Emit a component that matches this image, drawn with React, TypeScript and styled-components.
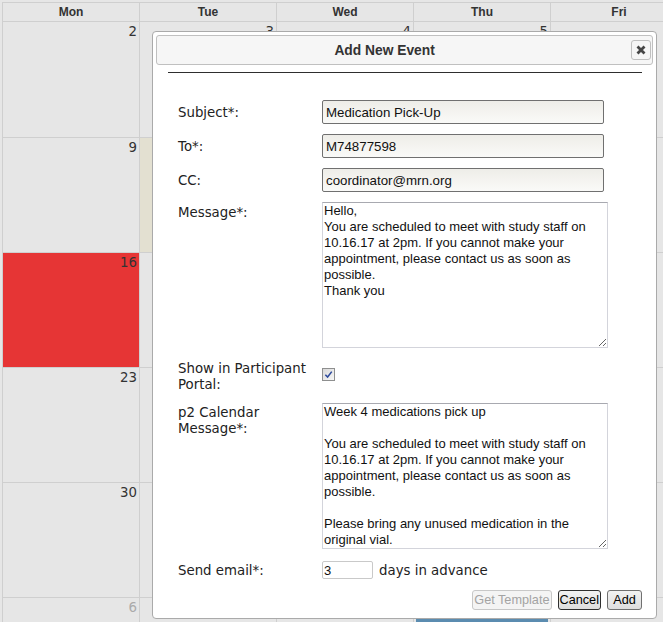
import styled, { createGlobalStyle } from 'styled-components';

const GlobalStyle = createGlobalStyle`
  html,
  body {
    margin: 0;
    height: 100%;
  }

  body {
    background: #e6e6e6;
    overflow: hidden;
    font-family: 'DejaVu Sans', Verdana, sans-serif;
  }
`;

const Page = styled.div`
  position: relative;
  height: 622px;
  padding: 2px 0 0 2px;
  box-sizing: border-box;
  overflow: hidden;
`;

/* month grid */

const Calendar = styled.div`
  display: grid;
  grid-template-columns: repeat(5, 137px);
  grid-template-rows: 19px 116px repeat(5, 115px);
  border-left: 1px solid #cfcfcf;
  border-top: 1px solid #cfcfcf;
`;

const HeaderCell = styled.div`
  box-sizing: border-box;
  border-right: 1px solid #cfcfcf;
  border-bottom: 1px solid #cfcfcf;
  background: #e6e6e6;
  text-align: center;
  font: bold 12px/18px 'Liberation Sans', Arial, sans-serif;
  color: #333;
`;

type Tone = 'plain' | 'today' | 'alert';

const cellColors: Record<Tone, string> = {
  plain: '#e6e6e6',
  today: '#e3e0d1',
  alert: '#e63535',
};

const DayCell = styled.div<{ $tone: Tone }>`
  box-sizing: border-box;
  border-right: 1px solid #cfcfcf;
  border-bottom: 1px solid #cfcfcf;
  background: ${({ $tone }) => cellColors[$tone]};
  padding: 2px 2px 0;
  overflow: hidden;
`;

const DayNumber = styled.div<{ $muted?: boolean }>`
  text-align: right;
  font-size: 13.33px;
  line-height: 16px;
  color: ${({ $muted }) => ($muted ? '#aaa' : '#333')};
`;

const EventChip = styled.div`
  margin: 3px 0 0;
  padding: 1px 4px;
  background: #5b8cb0;
  color: #fff;
  font: 11px/14px 'Liberation Sans', Arial, sans-serif;
  white-space: nowrap;
  overflow: hidden;
`;

/* dialog */

const Dialog = styled.div`
  position: absolute;
  left: 152px;
  top: 31px;
  width: 505px;
  height: 588px;
  box-sizing: border-box;
  padding: 3px;
  display: flex;
  flex-direction: column;
  background: #fff;
  border: 1px solid #aaa;
  border-radius: 4px;
`;

const TitleBar = styled.div`
  height: 30px;
  box-sizing: border-box;
  display: flex;
  align-items: center;
  padding: 0 1px 0 14px;
  background: #f6f6f6;
  border: 1px solid #c0c0c0;
  border-radius: 3px;
`;

const Title = styled.span`
  width: 89%;
  text-align: center;
  font: bold 13.8px 'Liberation Sans', Arial, sans-serif;
  color: #333;
`;

const CloseButton = styled.button`
  margin-left: auto;
  width: 20px;
  height: 20px;
  padding: 0;
  display: flex;
  align-items: center;
  justify-content: center;
  background: #f6f6f6;
  border: 1px solid #c0c0c0;
  border-radius: 3px;
`;

const Divider = styled.hr`
  margin: 7px 11px 0 12px;
  border: 0;
  border-top: 1px solid #2e2e2e;
`;

const Form = styled.div`
  display: grid;
  grid-template-columns: 136px 286px;
  column-gap: 8px;
  row-gap: 10px;
  align-items: start;
  padding: 27px 0 0 22px;
`;

const Label = styled.label<{ $pad: number }>`
  padding-top: ${({ $pad }) => $pad}px;
  font-size: 13.33px;
  line-height: 16px;
  color: #222;
`;

const TextInput = styled.input`
  justify-self: start;
  width: 282px;
  height: 24px;
  box-sizing: border-box;
  padding: 0 3px;
  border: 1px solid #707070;
  border-radius: 2px;
  background: linear-gradient(180deg, #eeede8 0%, #fafaf8 100%);
  font: 13.3px 'Liberation Sans', Arial, sans-serif;
  color: #111;
`;

const MessageBox = styled.textarea`
  justify-self: start;
  width: 286px;
  height: 146px;
  box-sizing: border-box;
  margin: 0;
  padding: 0 1px;
  border: 1px solid #d3d4db;
  border-top-color: #a8a9b0;
  background: #fff;
  font: 13px/16px 'Liberation Sans', Arial, sans-serif;
  color: #111;
  overflow: hidden;
  resize: vertical;
`;

const CheckBox = styled.span`
  margin-top: 10px;
  width: 13px;
  height: 13px;
  box-sizing: border-box;
  display: flex;
  align-items: center;
  justify-content: center;
  border: 1px solid #8e8f8f;
  background: linear-gradient(135deg, #d9d9d9 0%, #f7f7f7 100%);
`;

const InlineGroup = styled.div`
  display: flex;
  align-items: center;
  margin-top: 2px;
`;

const SmallInput = styled.input`
  width: 51px;
  height: 18px;
  box-sizing: border-box;
  padding: 0 1px;
  border: 1px solid #c9c9c9;
  border-radius: 2px;
  font: 13px 'Liberation Sans', Arial, sans-serif;
  color: #111;
`;

const Suffix = styled.span`
  margin-left: 6px;
  font-size: 13.33px;
  color: #222;
`;

const Actions = styled.div`
  display: flex;
  justify-content: flex-end;
  gap: 6px;
  margin-top: 11px;
  padding-right: 11px;
`;

type ButtonState = 'normal' | 'focused' | 'disabled';

const Button = styled.button<{ $state: ButtonState }>`
  min-width: 35px;
  height: 20px;
  box-sizing: border-box;
  padding: 0 1px;
  font: 12.7px 'Liberation Sans', Arial, sans-serif;
  border-radius: 3px;
  border: 1px solid
    ${({ $state }) =>
      $state === 'disabled' ? '#c8c8c8' : $state === 'focused' ? '#2f2f2f' : '#707070'};
  background: ${({ $state }) =>
    $state === 'disabled' ? '#f4f4f4' : 'linear-gradient(180deg, #f2f2f2 0%, #dddddd 100%)'};
  color: ${({ $state }) => ($state === 'disabled' ? '#a3a3a3' : '#000')};
`;

const days = ['Mon', 'Tue', 'Wed', 'Thu', 'Fri'];

const weeks = [
  [2, 3, 4, 5, 6],
  [9, 10, 11, 12, 13],
  [16, 17, 18, 19, 20],
  [23, 24, 25, 26, 27],
  [30, 31, 1, 2, 3],
  [6, 7, 8, 9, 10],
];

const toneFor = (week: number, day: number): Tone => {
  if (week === 1 && day === 1) return 'today';
  if (week === 2 && day === 0) return 'alert';
  return 'plain';
};

const isOtherMonth = (week: number, day: number) => week === 5 || (week === 4 && day >= 2);

const messageText = `Hello,
You are scheduled to meet with study staff on 10.16.17 at 2pm. If you cannot make your appointment, please contact us as soon as possible.
Thank you`;

const portalText = `Week 4 medications pick up

You are scheduled to meet with study staff on 10.16.17 at 2pm. If you cannot make your appointment, please contact us as soon as possible.

Please bring any unused medication in the original vial.`;

const App = () => (
  <Page>
    <GlobalStyle />
    <Calendar>
      {days.map((d) => (
        <HeaderCell key={d}>{d}</HeaderCell>
      ))}
      {weeks.map((week, w) =>
        week.map((n, d) => (
          <DayCell key={`${w}-${d}`} $tone={toneFor(w, d)}>
            <DayNumber $muted={isOtherMonth(w, d)}>{n}</DayNumber>
            {w === 5 && d === 3 && <EventChip>M74877598 Visit</EventChip>}
          </DayCell>
        ))
      )}
    </Calendar>

    <Dialog role="dialog" aria-label="Add New Event">
      <TitleBar>
        <Title>Add New Event</Title>
        <CloseButton type="button" aria-label="Close">
          <svg width="10" height="10" viewBox="0 0 10 10">
            <path d="M1.5 1.5L8.5 8.5M8.5 1.5L1.5 8.5" stroke="#454545" strokeWidth="2.8" />
          </svg>
        </CloseButton>
      </TitleBar>
      <Divider />

      <Form>
        <Label $pad={5}>Subject*:</Label>
        <TextInput defaultValue="Medication Pick-Up" />

        <Label $pad={5}>To*:</Label>
        <TextInput defaultValue="M74877598" />

        <Label $pad={5}>CC:</Label>
        <TextInput defaultValue="coordinator@mrn.org" />

        <Label $pad={3}>Message*:</Label>
        <MessageBox defaultValue={messageText} />

        <Label $pad={3}>Show in Participant Portal:</Label>
        <CheckBox role="checkbox" aria-checked="true">
          <svg width="9" height="9" viewBox="0 0 10 10">
            <path d="M1.5 5.2L4 7.8L8.6 1.8" fill="none" stroke="#2d4a9c" strokeWidth="1.7" />
          </svg>
        </CheckBox>

        <Label $pad={2}>p2 Calendar Message*:</Label>
        <MessageBox defaultValue={portalText} />

        <Label $pad={4}>Send email*:</Label>
        <InlineGroup>
          <SmallInput defaultValue="3" />
          <Suffix>days in advance</Suffix>
        </InlineGroup>
      </Form>

      <Actions>
        <Button type="button" $state="disabled" disabled>
          Get Template
        </Button>
        <Button type="button" $state="focused">
          Cancel
        </Button>
        <Button type="button" $state="normal">
          Add
        </Button>
      </Actions>
    </Dialog>
  </Page>
);

export default App;
